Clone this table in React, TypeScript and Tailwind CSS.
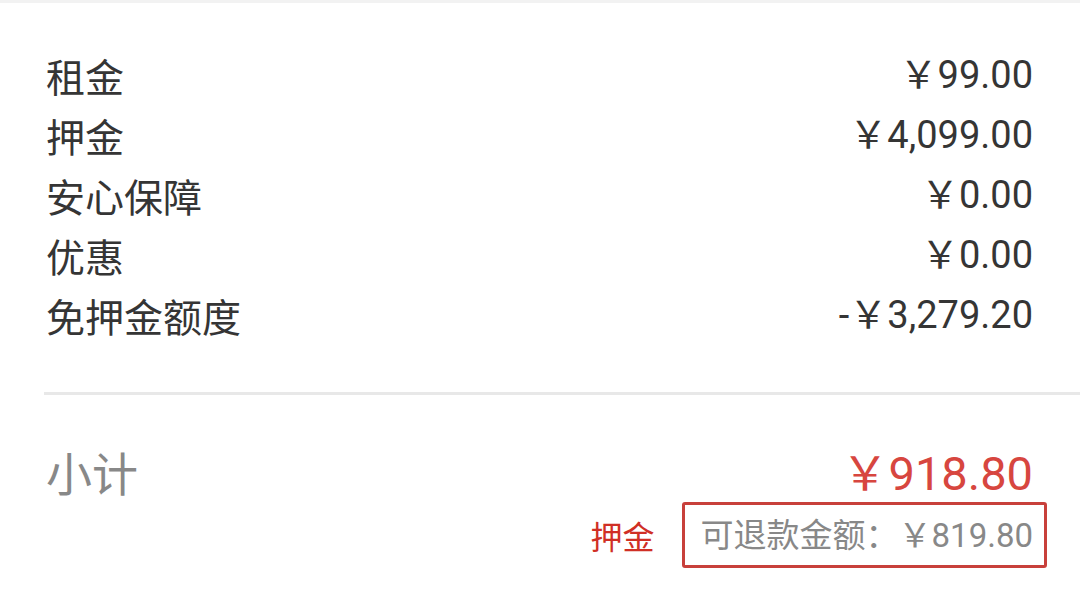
const rows = [
  { label: '租金', value: '￥99.00' },
  { label: '押金', value: '￥4,099.00' },
  { label: '安心保障', value: '￥0.00' },
  { label: '优惠', value: '￥0.00' },
  { label: '免押金额度', value: '-￥3,279.20' },
]

const cjk = "font-['Noto_Sans_CJK_SC',sans-serif]"
const num = "font-['Roboto','Noto_Sans_CJK_SC',sans-serif]"

export default function App() {
  return (
    <div className="w-[1080px] h-[606px] bg-white border-t-[3px] border-[#f2f2f2] overflow-hidden text-[#353535]">
      <div className="pl-[46px] pr-[47px] pt-[42px]">
        {rows.map(row => (
          <div key={row.label} className="h-[60px] flex items-center justify-between">
            <span className={`${cjk} text-[39px] leading-none`}>{row.label}</span>
            <span className={`${num} text-[38px] leading-none`}>{row.value}</span>
          </div>
        ))}
      </div>

      <div className="ml-[44px] mt-[47px] h-[3px] bg-[#e8e8e8]" />

      <div className="pl-[46px] pr-[47px] mt-[46px] h-[60px] flex items-center justify-between">
        <span className={`${cjk} text-[46px] leading-none text-[#888888]`}>小计</span>
        <span className={`${num} text-[47px] leading-none text-[#d7463f] pt-[4px]`}>￥918.80</span>
      </div>

      <div className="pr-[33px] mt-[1px] flex items-center justify-end">
        <span className={`${cjk} text-[32px] leading-none text-[#d02f25] mr-[27px]`}>押金</span>
        <div className="h-[66px] border-[3px] border-[#c8403b] rounded-[3px] pl-[16px] pr-[11px] flex items-center">
          <span className={`${num} text-[33px] leading-none text-[#888888]`}>可退款金额：￥819.80</span>
        </div>
      </div>
    </div>
  )
}
